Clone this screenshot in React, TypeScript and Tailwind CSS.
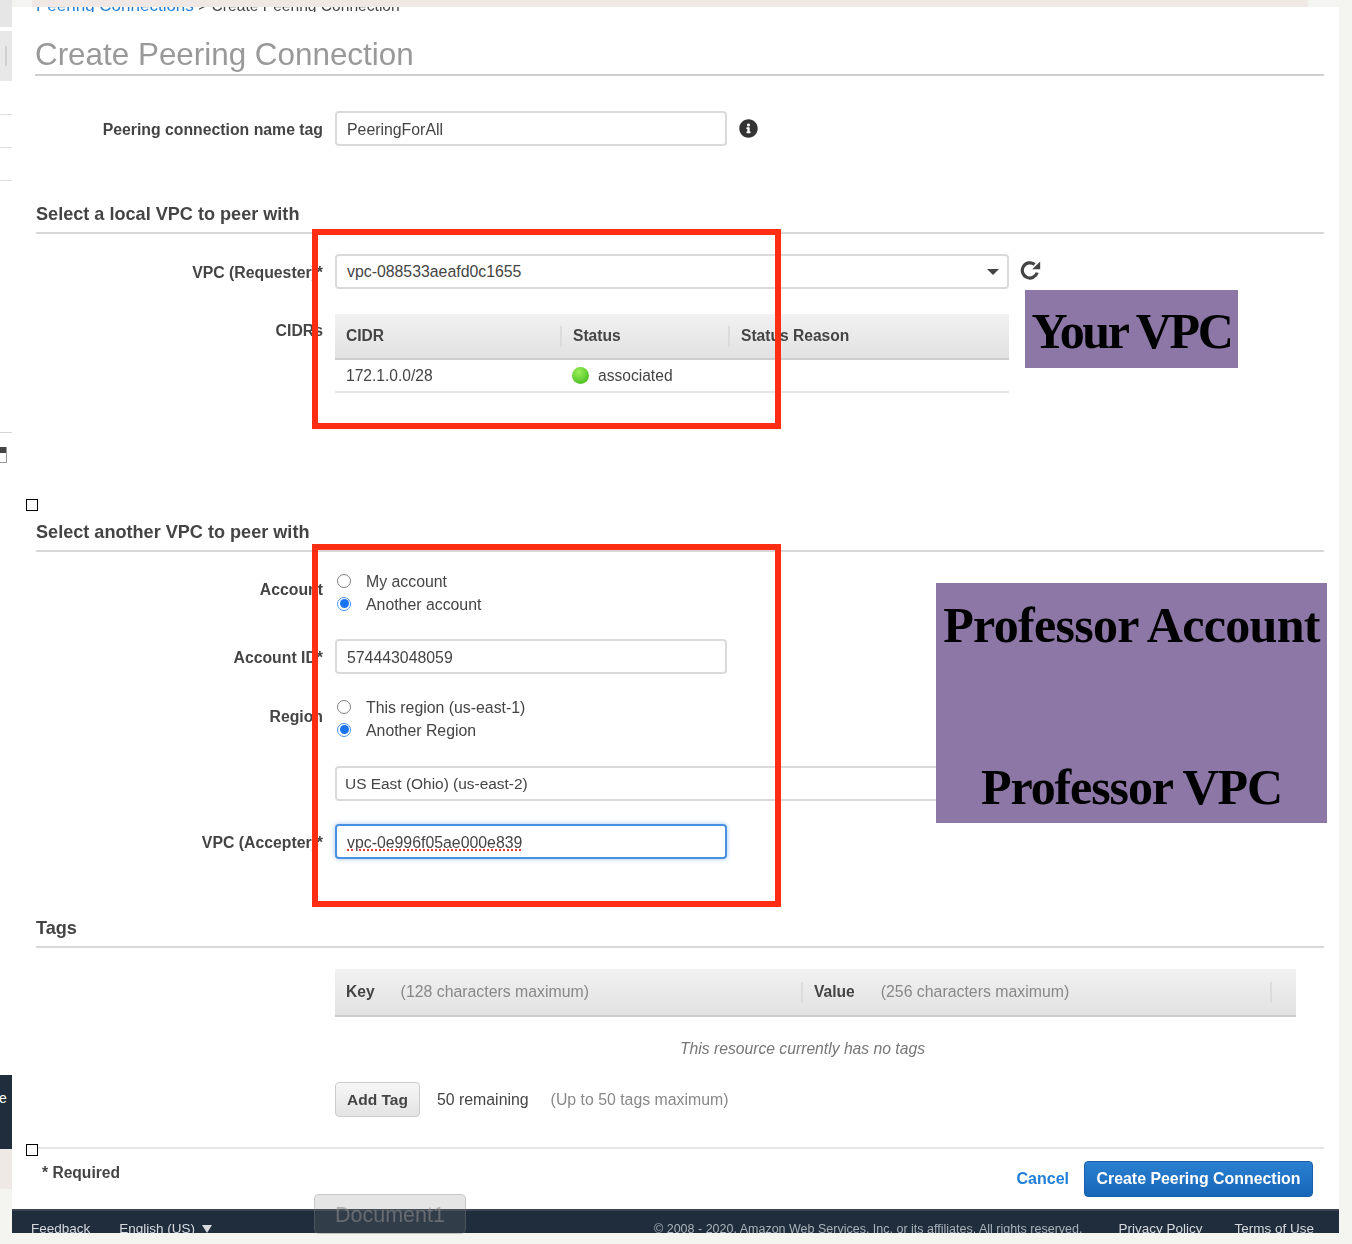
import React from "react";
import { FaInfoCircle } from "react-icons/fa";

const labelCls = "w-[287px] shrink-0 text-right font-bold text-[#444] text-[15.8px] leading-[20px]";

function Row({ label, children, labelTop = 0 }: { label: string; children: React.ReactNode; labelTop?: number }) {
  return (
    <div className="flex gap-3">
      <div className={labelCls} style={{ paddingTop: labelTop }}>{label}</div>
      {children}
    </div>
  );
}

function Field({ children, wide, focus, tight, shift }: { children: React.ReactNode; wide?: boolean; focus?: boolean; tight?: boolean; shift?: boolean }) {
  return (
    <div
      className={
        "h-[35px] rounded-[4px] bg-white flex items-center text-[#444] border-2 " +
        (shift ? "pt-[2px] " : "") +
        (tight ? "pl-[8px] text-[15.45px] " : "pl-[10px] text-[15.85px] ") +
        (wide ? "w-[674px] " : "w-[392px] ") +
        (focus ? "border-[#4a90e2] shadow-[0_0_5px_#9fc5f0]" : "border-[#dadada]")
      }
    >
      {children}
    </div>
  );
}

function Radio({ on, text }: { on?: boolean; text: string }) {
  return (
    <div className="h-[23px] flex items-center text-[15.85px] text-[#444]">
      <span className={"ml-[2px] mb-[2px] w-[14px] h-[14px] rounded-full flex items-center justify-center border " + (on ? "border-[#4a94f5] bg-white" : "border-[#808080] bg-white")}>
        {on && <span className="w-[9px] h-[9px] rounded-full bg-[#1a73f0]" />}
      </span>
      <span className="ml-[15px]">{text}</span>
    </div>
  );
}

function Heading({ text, h }: { text: string; h: string }) {
  return (
    <div className={h + " flex items-end border-b-2 border-[#d8d8d8] pb-[7px] text-[18.1px] leading-[22px] font-bold text-[#444]"}>{text}</div>
  );
}

function Th({ w, text, sep }: { w?: string; text: string; sep?: boolean }) {
  return (
    <div className={(w || "") + " h-[21px] flex items-center pl-[11px] font-bold text-[#444] " + (sep ? "border-l-2 border-[#dcdcdc]" : "")}>
      {text}
    </div>
  );
}

function RefreshIcon() {
  return (
    <svg width="22" height="20" viewBox="0 0 22 20" className="mt-[6px] -ml-[2px] shrink-0" aria-hidden="true">
      <path d="M18.2 12.6 A7.6 7.6 0 1 1 15.6 4.4" fill="none" stroke="#444" strokeWidth="3.2" />
      <polygon points="13.2,9.2 21.2,9.2 21.2,1.6" fill="#444" />
    </svg>
  );
}

export default function App() {
  return (
    <div className="relative w-[1352px] h-[1244px] overflow-hidden bg-[#f4f5f1] font-['Liberation_Sans',Arial,sans-serif]">
      <div className="flex h-[1233px]">
        {/* left sliver of the page behind */}
        <div className="w-[12px] shrink-0 flex flex-col bg-white">
          <div className="h-[27px] bg-[#e6e6e6]" />
          <div className="h-[4px]" />
          <div className="h-[50px] bg-[#e8e8e8] flex items-center justify-center">
            <span className="w-[2px] h-[20px] bg-[#cfcfcf]" />
          </div>
          <div className="h-[34px] border-b border-[#dddddd]" />
          <div className="h-[33px] border-b border-[#dddddd]" />
          <div className="h-[33px] border-b border-[#dddddd]" />
          <div className="h-[252px] border-b border-[#d5d5d5]" />
          <div className="h-[14px]" />
          <div className="w-[7px] h-[16px] border-r border-b border-[#999] bg-white">
            <div className="h-[6px] bg-[#444]" />
          </div>
          <div className="h-[612px]" />
          <div className="h-[74px] bg-[#1f2d3d] text-white text-[14px] leading-[46px]">
            <span className="block -ml-[1px]">e</span>
          </div>
          <div className="h-[40px] bg-[#efe9e6]" />
          <div className="flex-1 bg-[#f4f5f1]" />
        </div>

        {/* main sheet */}
        <div className="w-[1327px] shrink-0 flex flex-col mt-[7px] h-[1226px] bg-white">
          <div className="flex-1 blur-[0.4px] pl-[24px] pr-[15px]">
            <div className="h-[5px] overflow-hidden">
              <div className="-mt-[11px] text-[15.6px] leading-[20px] text-[#444] whitespace-nowrap">
                <span className="text-[17px] text-[#1f7fd8]">Peering Connections</span> &gt; Create Peering Connection
              </div>
            </div>
            <div className="h-[64px] -ml-[1px] border-b-2 border-[#cfcfcf] flex items-end pb-[1px] text-[31.4px] leading-[36px] text-[#999]">
              Create Peering Connection
            </div>

            <div className="mt-[35px]">
              <Row label="Peering connection name tag" labelTop={9}>
                <Field shift>PeeringForAll</Field>
                <FaInfoCircle className="mt-[8px] text-[19px] text-[#333]" />
              </Row>
            </div>

            <Heading text="Select a local VPC to peer with" h="h-[88px]" />

            <div className="mt-[20px]">
              <Row label="VPC (Requester)*" labelTop={9}>
                <div className="relative">
                  <Field wide>vpc-088533aeafd0c1655</Field>
                  <span className="absolute right-[10px] top-[15px] w-0 h-0 border-x-[6px] border-x-transparent border-t-[6px] border-t-[#444]" />
                </div>
                <RefreshIcon />
              </Row>
            </div>

            <div className="mt-[25px]">
              <Row label="CIDRs" labelTop={7}>
                <div className="w-[674px] text-[15.6px] text-[#444]">
                  <div className="h-[46px] flex items-center bg-gradient-to-b from-[#f1f1f1] to-[#e2e2e2] border-b-2 border-[#cdcdcd]">
                    <Th w="w-[225px]" text="CIDR" />
                    <Th w="w-[168px]" text="Status" sep />
                    <Th text="Status Reason" sep />
                  </div>
                  <div className="h-[33px] flex items-center pt-[1px] border-b-2 border-[#e6e6e6]">
                    <div className="w-[225px] pl-[11px]">172.1.0.0/28</div>
                    <div className="flex items-center">
                      <span className="ml-[12px] w-[17px] h-[17px] rounded-full bg-[radial-gradient(circle_at_40%_30%,#9cf05a,#35b012)]" />
                      <span className="ml-[9px]">associated</span>
                    </div>
                  </div>
                </div>
              </Row>
            </div>

            <Heading text="Select another VPC to peer with" h="h-[159px]" />

            <div className="mt-[18px]">
              <Row label="Account" labelTop={10}>
                <div>
                  <Radio text="My account" />
                  <Radio on text="Another account" />
                </div>
              </Row>
            </div>
            <div className="mt-[23px]">
              <Row label="Account ID*" labelTop={9}>
                <Field shift>574443048059</Field>
              </Row>
            </div>
            <div className="mt-[22px]">
              <Row label="Region" labelTop={11}>
                <div>
                  <Radio text="This region (us-east-1)" />
                  <Radio on text="Another Region" />
                </div>
              </Row>
            </div>
            <div className="mt-[24px] pl-[299px]">
              <Field wide tight>US East (Ohio) (us-east-2)</Field>
            </div>
            <div className="mt-[23px]">
              <Row label="VPC (Accepter)*" labelTop={9}>
                <Field focus shift>
                  <span className="underline decoration-dotted decoration-[#e04040] decoration-2 underline-offset-[2px]">vpc-0e996f05ae000e839</span>
                </Field>
              </Row>
            </div>

            <Heading text="Tags" h="h-[89px]" />

            <div className="mt-[21px] ml-[299px] w-[961px] h-[48px] flex items-center bg-gradient-to-b from-[#f1f1f1] to-[#e2e2e2] border-b-2 border-[#cdcdcd] text-[15.6px]">
              <div className="w-[466px] pl-[11px] flex">
                <span className="font-bold text-[#444]">Key</span>
                <span className="ml-[26px] text-[15.85px] text-[#888]">(128 characters maximum)</span>
              </div>
              <div className="w-[471px] h-[21px] border-x-2 border-[#dcdcdc] pl-[11px] flex items-center">
                <span className="font-bold text-[#444]">Value</span>
                <span className="ml-[26px] text-[15.85px] text-[#888]">(256 characters maximum)</span>
              </div>
            </div>
            <div className="ml-[299px] w-[935px] h-[65px] pb-[2px] flex items-center justify-center text-[15.7px] italic text-[#777]">
              This resource currently has no tags
            </div>

            <div className="ml-[299px] flex items-center text-[15.85px]">
              <div className="w-[85px] h-[35px] rounded-[4px] border border-[#cccccc] bg-gradient-to-b from-[#f6f6f6] to-[#e4e4e4] flex items-center justify-center font-bold text-[15.5px] text-[#444]">Add Tag</div>
              <span className="ml-[17px] text-[#444]">50 remaining</span>
              <span className="ml-[22px] text-[#888]">(Up to 50 tags maximum)</span>
            </div>

            <div className="mt-[30px] h-[2px] bg-[#e6e6e6]" />

            <div className="mt-[12px] flex items-start justify-between pr-[11px]">
              <div className="ml-[6px] mt-[2px] font-bold text-[15.6px] leading-[20px] text-[#444]">* Required</div>
              <div className="flex items-center">
                <span className="font-bold text-[16px] text-[#1f7fd8]">Cancel</span>
                <div className="ml-[15px] w-[229px] h-[36px] rounded-[4px] border border-[#1b5fa8] bg-gradient-to-b from-[#2a80d2] to-[#1666b8] flex items-center justify-center font-bold text-[15.9px] text-white">
                  Create Peering Connection
                </div>
              </div>
            </div>
          </div>

          <div className="h-[24px] bg-[#1f2d3d] border-t-2 border-[#3a4654] overflow-hidden blur-[0.3px] flex items-start justify-between pl-[19px] pr-[25px] pt-[10px] text-[13.5px] leading-[16px] text-[#d5d9dd]">
            <div className="flex">
              <span>Feedback</span>
              <span className="ml-[29px]">English (US)</span>
              <span className="ml-[7px] mt-[4px] w-0 h-0 border-x-[5px] border-x-transparent border-t-[8px] border-t-[#d5d9dd]" />
            </div>
            <div className="flex">
              <span className="text-[12.5px] text-[#aab1b8]">© 2008 - 2020, Amazon Web Services, Inc. or its affiliates. All rights reserved.</span>
              <span className="ml-[36px]">Privacy Policy</span>
              <span className="ml-[32px]">Terms of Use</span>
            </div>
          </div>
        </div>
        <div className="flex-1" />
      </div>

      {/* top banner sliver */}
      <div className="absolute left-[32px] top-0 w-[1276px] h-[7px] bg-[#f0e8e5]" />

      {/* annotation overlays */}
      <div className="absolute left-[312px] top-[229px] w-[469px] h-[200px] border-[6px] border-[#ff2d12]" />
      <div className="absolute left-[312px] top-[544px] w-[469px] h-[363px] border-[6px] border-[#ff2d12]" />

      <div className="absolute left-[1025px] top-[290px] w-[213px] h-[78px] pt-[4px] bg-[#8d77a6] flex items-center justify-center font-['Liberation_Serif',serif] font-bold text-[50px] leading-none tracking-[-2.4px] text-black">
        Your VPC
      </div>
      <div className="absolute left-[936px] top-[583px] w-[391px] h-[240px] bg-[#8d77a6] flex flex-col items-center justify-between pt-[15px] pb-[9px] font-['Liberation_Serif',serif] font-bold text-[50px] leading-[54px] text-black">
        <div className="tracking-[-0.7px]">Professor Account</div>
        <div className="tracking-[-1.1px]">Professor VPC</div>
      </div>

      <div className="absolute left-[26px] top-[499px] w-[12px] h-[12px] bg-white border border-black" />
      <div className="absolute left-[26px] top-[1144px] w-[12px] h-[12px] bg-white border border-black" />

      {/* dock tooltip */}
      <div className="absolute left-[314px] top-[1194px] w-[152px] h-[40px] pt-[2px] rounded-[5px] border border-[#8888884d] bg-[#7f7f7f33] flex items-center justify-center text-[21.5px] text-[#8a8a8a99]">
        Document1
      </div>
    </div>
  );
}
